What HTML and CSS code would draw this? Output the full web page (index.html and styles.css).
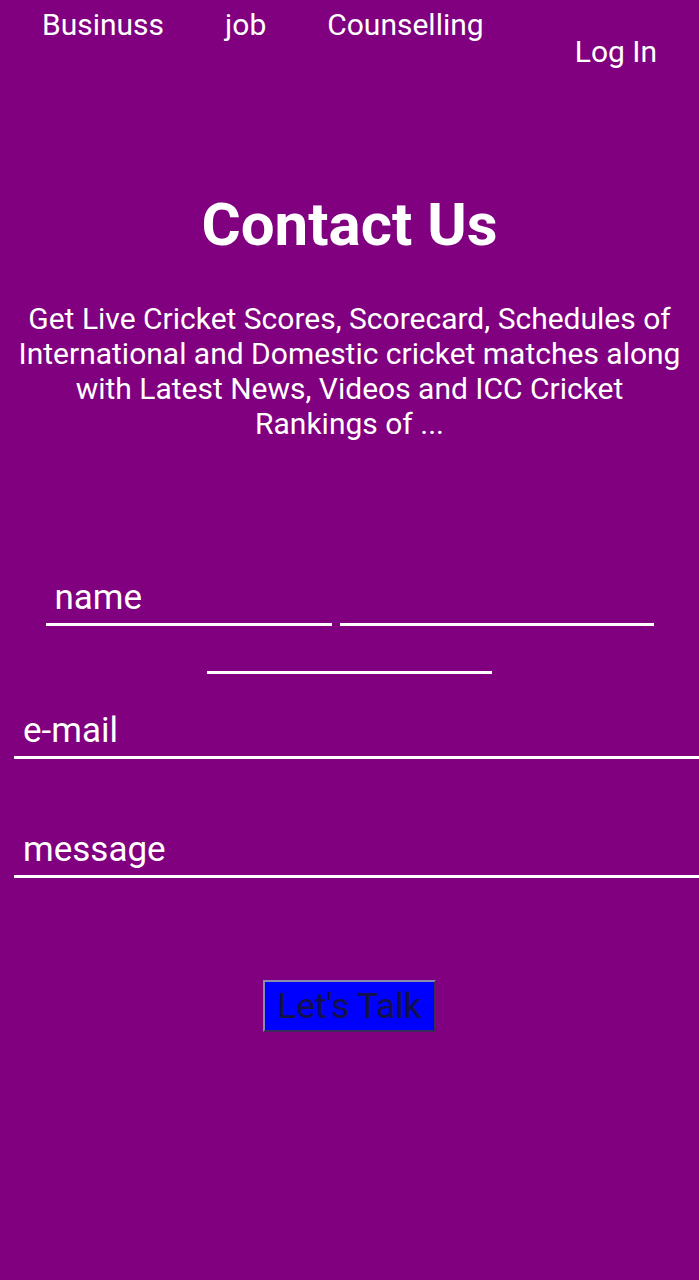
FILE: index.html
```html
<!DOCTYPE html>
<html>
<head>
<meta charset="utf-8">
<link rel="stylesheet" href="styles.css">
</head>
<body>
<div class="page">
  <nav class="nav">
    <a class="nav-link" href="#">Businuss</a>
    <a class="nav-link" href="#">job</a>
    <a class="nav-link" href="#">Counselling</a>
    <a class="nav-login" href="#">Log In</a>
  </nav>
  <h1 class="title">Contact Us</h1>
  <p class="intro">Get Live Cricket Scores, Scorecard, Schedules of International and Domestic cricket matches along with Latest News, Videos and ICC Cricket Rankings of ...</p>
  <form class="form">
    <div class="row">
      <input class="field field-a" type="text" placeholder="name">
      <input class="field field-b" type="text">
    </div>
    <div class="row row-2">
      <input class="field field-c" type="text">
    </div>
    <input class="field wide email" type="text" placeholder="e-mail">
    <input class="field wide message" type="text" placeholder="message">
    <div class="actions">
      <button class="btn" type="button">Let's Talk</button>
    </div>
  </form>
</div>
</body>
</html>
```
FILE: styles.css
```css
html, body {
  margin: 0;
  padding: 0;
  background: #800080;
  height: 100%;
}
body {
  font-family: Roboto, "Noto Sans", sans-serif;
  color: #fff;
  overflow-x: hidden;
}
.page {
  min-height: 1280px;
  background: #800080;
}
.nav {
  display: flex;
  align-items: flex-start;
  padding: 5px 42px 0 42px;
}
.nav-link,
.nav-login {
  color: #fff;
  text-decoration: none;
  font-size: 30px;
  line-height: 40px;
}
.nav-link {
  margin-right: 61px;
}
.nav-login {
  margin-left: auto;
  margin-top: 27px;
}
.title {
  margin: 117px 0 0 0;
  text-align: center;
  font-size: 60px;
  line-height: 72px;
  font-weight: 700;
}
.intro {
  margin: 40px 15px 0 15px;
  text-align: center;
  font-size: 30px;
  line-height: 35px;
}
.form {
  margin-top: 135px;
}
.row {
  display: flex;
  justify-content: center;
  gap: 8px;
}
.row-2 {
  margin-top: -2px;
}
.field {
  background: transparent;
  border: none;
  border-bottom: 3px solid #fff;
  color: #fff;
  font-family: Roboto, "Noto Sans", sans-serif;
  font-size: 35px;
  padding: 0 9px 4px 9px;
  height: 50px;
  box-sizing: border-box;
  outline: none;
}
.field::placeholder {
  color: #fff;
  opacity: 1;
}
.field-a { width: 286px; }
.field-b { width: 314px; }
.field-c { width: 285px; }
.wide {
  display: block;
  width: 100%;
  margin-left: 14px;
}
.email {
  margin-top: 35px;
}
.message {
  margin-top: 69px;
}
.actions {
  display: flex;
  justify-content: center;
  margin-top: 102px;
}
.btn {
  background: #0000ff;
  color: #14104a;
  font-family: Roboto, "Noto Sans", sans-serif;
  font-size: 35px;
  width: 173px;
  height: 52px;
  padding: 0;
  border: 2px solid;
  border-color: #8a8ab0 #3a2a5a #3a2a5a #8a8ab0;
}
```
